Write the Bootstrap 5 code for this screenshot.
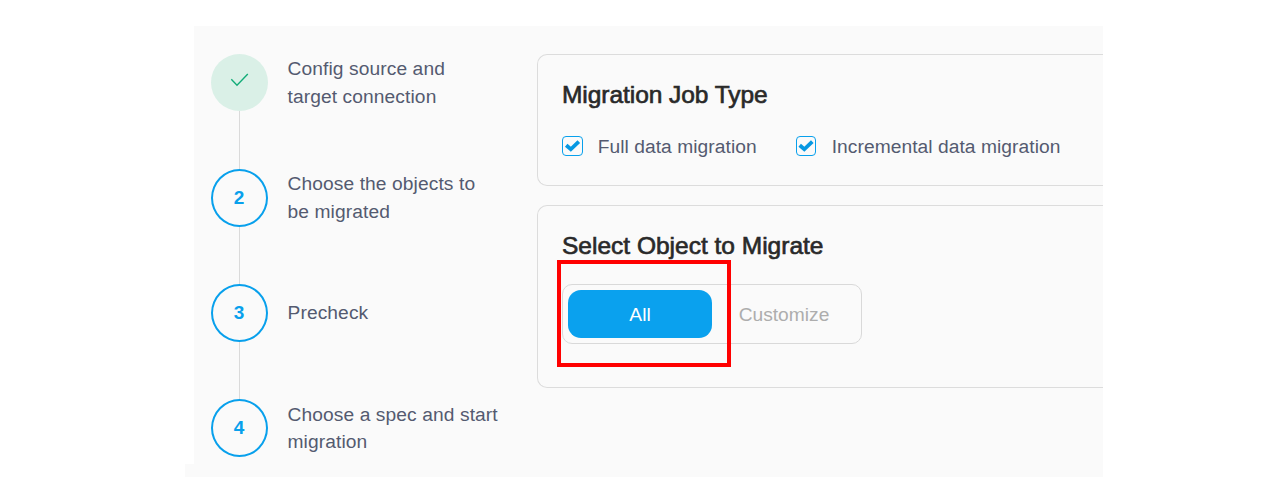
<!DOCTYPE html>
<html lang="en">
<head>
<meta charset="utf-8">
<meta name="viewport" content="width=device-width, initial-scale=1">
<title>Migration job</title>
<link href="https://cdn.jsdelivr.net/npm/bootstrap@5.3.0/dist/css/bootstrap.min.css" rel="stylesheet">
<style>
  body { font-family: "Liberation Sans", Arial, sans-serif; font-size: 19.2px; color: #545a70; height: 499px; overflow: hidden; background: #fff; }
  .wizard { width: 909px; height: 451px; margin: 26px 0 0 194px; background: #fafafa; padding: 28px 0 0 17px; }
  .wizard-foot { position: absolute; left: -9px; bottom: 0; width: 9px; height: 13px; background: #fafafa; }
  .steps { width: 326px; }
  .step { height: 115px; }
  .step-rail { width: 57px; height: 115px; }
  .step:last-child, .step:last-child .step-rail { height: 58px; }
  .step-dot { width: 57px; height: 58px; border: 2px solid #08a0ec; color: #08a0ec; font-size: 19px; font-weight: 700; padding-right: 1px; }
  .step-dot.done { height: 57px; border: 0; background: #daf0e7; padding: 0; }
  .step-line { width: 1px; background: #dadada; }
  .step-text { margin-left: 19.5px; height: 58px; line-height: 28px; letter-spacing: .1px; }
  .step-text.tight { line-height: 27px; }
  .panel-box { border: 1px solid #dcdcdc; border-right: 0; border-radius: 10px 0 0 10px; padding-left: 24px; }
  .job { height: 132px; margin-bottom: 19px; }
  .objects { height: 183px; }
  .panel-heading { font-size: 24.5px; line-height: 30px; margin: 25px 0 0; color: #292929; font-weight: 400; -webkit-text-stroke: .65px #292929; }
  .job .panel-heading { letter-spacing: -.05px; }
  .choices { margin-top: 22px; height: 28px; }
  .choice { height: 28px; letter-spacing: .06px; }
  .choice.first { width: 234px; }
  .choice span { line-height: 28px; padding-top: 2px; }
  .tick { width: 21px; height: 20px; margin-right: 14.7px; }
  .toggle { width: 300px; height: 60px; margin-top: 23px; padding: 5px; border: 1px solid #d9d9d9; border-radius: 10px; }
  .toggle-btn { width: 144px; height: 48px; border: 0; border-radius: 13px; padding: 2px 0 0; font-size: 19.2px; color: #adadad; background: none; }
  .toggle-btn.on { background: #0aa1ee; color: #fff; }
  .highlight { position: absolute; left: -6.5px; top: -25.5px; width: 174.5px; height: 107.5px; border: 4px solid #f00; }
</style>
</head>
<body>
<main class="wizard d-flex position-relative">
  <div class="wizard-foot"></div>
  <div class="steps flex-shrink-0">
    <div class="step d-flex">
      <div class="step-rail d-flex flex-column align-items-center">
        <div class="step-dot done rounded-circle flex-shrink-0">
          <svg class="d-block" width="57" height="57" viewBox="0 0 57 57" fill="none" stroke="#12ac78" stroke-width="1.4"><path d="M20.3 25.2 26 31.2 36.8 20"/></svg>
        </div>
        <div class="step-line flex-grow-1"></div>
      </div>
      <div class="step-text d-flex align-items-center">Config source and<br>target connection</div>
    </div>
    <div class="step d-flex">
      <div class="step-rail d-flex flex-column align-items-center">
        <div class="step-dot rounded-circle flex-shrink-0 d-flex align-items-center justify-content-center">2</div>
        <div class="step-line flex-grow-1"></div>
      </div>
      <div class="step-text d-flex align-items-center">Choose the objects to<br>be migrated</div>
    </div>
    <div class="step d-flex">
      <div class="step-rail d-flex flex-column align-items-center">
        <div class="step-dot rounded-circle flex-shrink-0 d-flex align-items-center justify-content-center">3</div>
        <div class="step-line flex-grow-1"></div>
      </div>
      <div class="step-text d-flex align-items-center">Precheck</div>
    </div>
    <div class="step d-flex">
      <div class="step-rail d-flex flex-column align-items-center">
        <div class="step-dot rounded-circle flex-shrink-0 d-flex align-items-center justify-content-center">4</div>
      </div>
      <div class="step-text tight d-flex align-items-center">Choose a spec and start<br>migration</div>
    </div>
  </div>
  <div class="flex-grow-1">
    <section class="panel-box job d-flex flex-column">
      <h2 class="panel-heading">Migration Job Type</h2>
      <div class="choices d-flex">
        <div class="choice first d-flex align-items-center">
          <svg class="tick" viewBox="0 0 21 20" fill="none" stroke="#08a0ec"><rect x=".5" y=".5" width="20" height="19" rx="3.5"/><path d="M4.2 9.3 8.8 13.3 16.8 5.6" stroke="#0798e2" stroke-width="3.8"/></svg><span>Full data migration</span>
        </div>
        <div class="choice d-flex align-items-center">
          <svg class="tick" viewBox="0 0 21 20" fill="none" stroke="#08a0ec"><rect x=".5" y=".5" width="19" height="19" rx="3.5"/><path d="M3.7 9.3 8.3 13.3 16.3 5.6" stroke="#0798e2" stroke-width="3.8"/></svg><span>Incremental data migration</span>
        </div>
      </div>
    </section>
    <section class="panel-box objects d-flex flex-column">
      <h2 class="panel-heading">Select Object to Migrate</h2>
      <div class="toggle d-flex position-relative">
        <button type="button" class="toggle-btn on">All</button>
        <button type="button" class="toggle-btn">Customize</button>
        <div class="highlight"></div>
      </div>
    </section>
  </div>
</main>
<script src="https://cdn.jsdelivr.net/npm/bootstrap@5.3.0/dist/js/bootstrap.bundle.min.js"></script>
</body>
</html>
